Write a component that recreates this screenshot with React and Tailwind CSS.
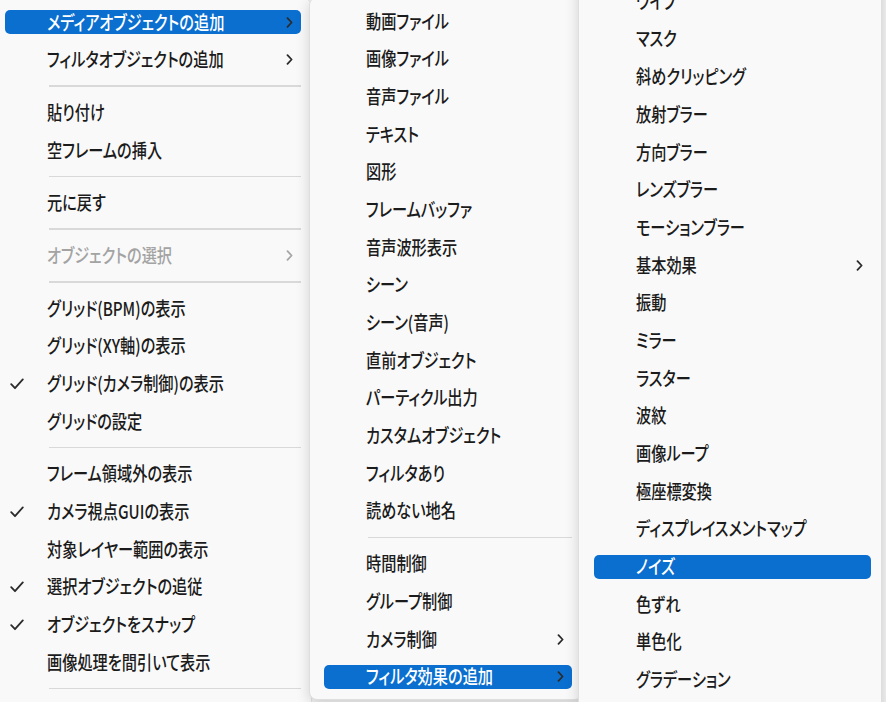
import React from "react";

const Chevron = () => (
  <svg width="7" height="11" viewBox="0 0 7 11">
    <path d="M1.5 1.2 L5.6 5.5 L1.5 9.8" stroke="#2b2b2b" strokeWidth="1.8" fill="none" strokeLinecap="round" strokeLinejoin="round" />
  </svg>
);

const Check = () => (
  <svg width="14" height="12" viewBox="0 0 14 12">
    <path d="M1.2 6.2 L5 10.2 L12.8 1.4" stroke="#2b2b2b" strokeWidth="1.8" fill="none" strokeLinecap="round" strokeLinejoin="round" />
  </svg>
);

function Item({ label, sub, checked, active, disabled }) {
  return (
    <div className="h-[37.7px] flex items-center">
      <div
        className={
          "flex items-center w-full h-[24px] rounded-[5px] " +
          (active ? "bg-[#0b6fd0]" : "")
        }
      >
        <span className="w-[42px] shrink-0 flex items-center pl-[5px]">
          {checked ? <Check /> : null}
        </span>
        <span className="flex-1 min-w-0 flex items-center">
          <span
            className={
              "inline-block origin-left scale-x-[0.8] -translate-y-[1px] text-[19px] leading-none font-medium whitespace-nowrap [font-feature-settings:'palt'] " +
              (active ? "text-white" : disabled ? "text-[#a3a3a3]" : "text-[#1b1b1b]")
            }
          >
            {label}
          </span>
        </span>
        {sub ? (
          <span className={"ml-auto mr-[8px] flex items-center " + (disabled ? "opacity-40" : "")}>
            <Chevron />
          </span>
        ) : null}
      </div>
    </div>
  );
}

function Sep() {
  return (
    <div className="h-[15px] flex items-center pl-[44px]">
      <div className="h-[1.5px] w-full bg-[#d9d9d9]" />
    </div>
  );
}

function renderItems(list) {
  return list.map((it, i) =>
    it === "-" ? <Sep key={i} /> : <Item key={i} {...it} />
  );
}

const menu1 = [
  { label: "メディアオブジェクトの追加", sub: true, active: true },
  { label: "フィルタオブジェクトの追加", sub: true },
  "-",
  { label: "貼り付け" },
  { label: "空フレームの挿入" },
  "-",
  { label: "元に戻す" },
  "-",
  { label: "オブジェクトの選択", sub: true, disabled: true },
  "-",
  { label: "グリッド(BPM)の表示" },
  { label: "グリッド(XY軸)の表示" },
  { label: "グリッド(カメラ制御)の表示", checked: true },
  { label: "グリッドの設定" },
  "-",
  { label: "フレーム領域外の表示" },
  { label: "カメラ視点GUIの表示", checked: true },
  { label: "対象レイヤー範囲の表示" },
  { label: "選択オブジェクトの追従", checked: true },
  { label: "オブジェクトをスナップ", checked: true },
  { label: "画像処理を間引いて表示" },
  "-",
  { label: "" },
];

const menu2 = [
  { label: "動画ファイル" },
  { label: "画像ファイル" },
  { label: "音声ファイル" },
  { label: "テキスト" },
  { label: "図形" },
  { label: "フレームバッファ" },
  { label: "音声波形表示" },
  { label: "シーン" },
  { label: "シーン(音声)" },
  { label: "直前オブジェクト" },
  { label: "パーティクル出力" },
  { label: "カスタムオブジェクト" },
  { label: "フィルタあり" },
  { label: "読めない地名" },
  "-",
  { label: "時間制御" },
  { label: "グループ制御" },
  { label: "カメラ制御", sub: true },
  { label: "フィルタ効果の追加", sub: true, active: true },
];

const menu3 = [
  { label: "ワイプ" },
  { label: "マスク" },
  { label: "斜めクリッピング" },
  { label: "放射ブラー" },
  { label: "方向ブラー" },
  { label: "レンズブラー" },
  { label: "モーションブラー" },
  { label: "基本効果", sub: true },
  { label: "振動" },
  { label: "ミラー" },
  { label: "ラスター" },
  { label: "波紋" },
  { label: "画像ループ" },
  { label: "極座標変換" },
  { label: "ディスプレイスメントマップ" },
  { label: "ノイズ", active: true },
  { label: "色ずれ" },
  { label: "単色化" },
  { label: "グラデーション" },
  { label: "" },
];

export default function App() {
  return (
    <div
      className="relative w-[886px] h-[702px] overflow-hidden bg-[#f3f3f3]"
      style={{ fontFamily: '"Noto Sans CJK JP", "Noto Sans", sans-serif' }}
    >
      <div className="absolute left-[-10px] top-[-1.85px] w-[322px] pl-[14px] pr-[10px] pt-[4px] bg-[#f9f9f9] rounded-[8px] border border-[#e3e3e3] z-10">
        {renderItems(menu1)}
      </div>
      <div className="absolute left-[309px] top-[-2.85px] w-[274px] pl-[14px] pr-[10px] pt-[4px] pb-[3px] bg-[#f9f9f9] rounded-[8px] border border-[#dedede] shadow-[0_4px_14px_rgba(0,0,0,0.16)] z-20">
        {renderItems(menu2)}
      </div>
      <div className="absolute left-[578px] top-[-22.55px] w-[304px] pl-[15px] pr-[10px] pt-[4px] bg-[#f9f9f9] rounded-[8px] border border-[#dedede] shadow-[0_4px_14px_rgba(0,0,0,0.16)] z-30">
        {renderItems(menu3)}
      </div>
    </div>
  );
}
